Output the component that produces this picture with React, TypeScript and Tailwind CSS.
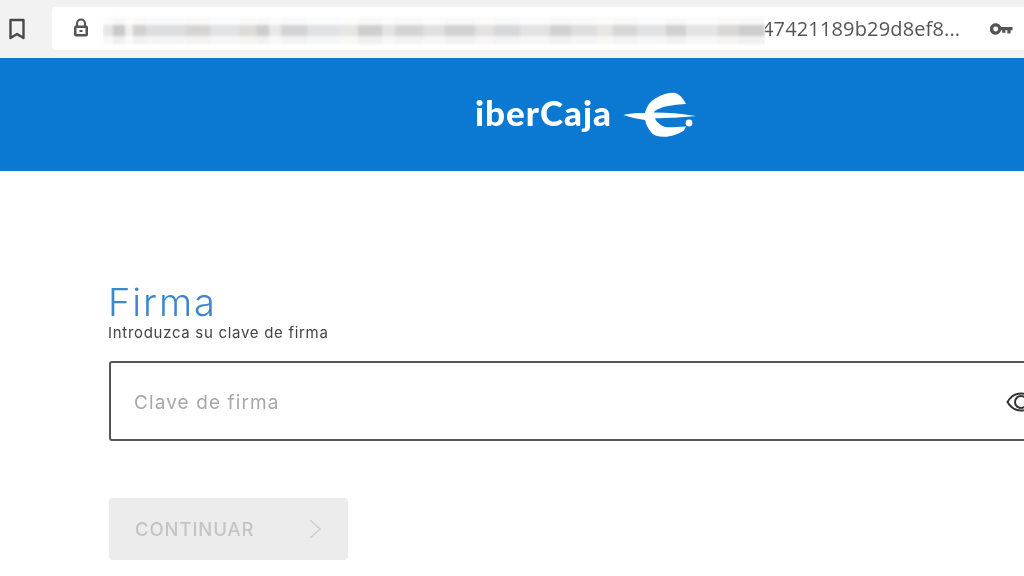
import React from 'react';

const blurBlocks = [
  ['w-[10px]', 'bg-[#e6e6e6]'], ['w-[12px]', 'bg-[#c9c9c9]'], ['w-[8px]', 'bg-[#efefef]'], ['w-[14px]', 'bg-[#d3d1cf]'],
  ['w-[40px]', 'bg-[#dcdddf]'], ['w-[24px]', 'bg-[#d6d4d3]'], ['w-[30px]', 'bg-[#e1e2e4]'], ['w-[18px]', 'bg-[#dfdbd8]'],
  ['w-[12px]', 'bg-[#cdcdcd]'], ['w-[12px]', 'bg-[#e8e8e8]'], ['w-[26px]', 'bg-[#d3d3d6]'], ['w-[34px]', 'bg-[#dfe1e4]'],
  ['w-[18px]', 'bg-[#e8e6e4]'], ['w-[24px]', 'bg-[#cecece]'], ['w-[14px]', 'bg-[#e3e4e6]'], ['w-[28px]', 'bg-[#d4d3d3]'],
  ['w-[22px]', 'bg-[#e0e0e2]'], ['w-[30px]', 'bg-[#d2d2d2]'], ['w-[20px]', 'bg-[#e4e2e0]'], ['w-[26px]', 'bg-[#d7d8db]'],
  ['w-[30px]', 'bg-[#e2e2e2]'], ['w-[22px]', 'bg-[#d1d1d1]'], ['w-[26px]', 'bg-[#dededf]'], ['w-[16px]', 'bg-[#e8e5e2]'],
  ['w-[24px]', 'bg-[#d6d6d6]'], ['w-[30px]', 'bg-[#e0e1e3]'], ['w-[20px]', 'bg-[#d0d0d0]'], ['w-[32px]', 'bg-[#e4e4e4]'],
  ['w-[22px]', 'bg-[#d9d7d5]'], ['w-[26px]', 'bg-[#cdcdcd]'],
];

const LockIcon = () => (
  <svg width="18" height="20" viewBox="0 0 18 20" fill="none">
    <path d="M5 8V5.5a4 4 0 0 1 8 0V8" stroke="#555" strokeWidth="2.2" />
    <rect x="2" y="7.5" width="14" height="11" rx="2" fill="#555" />
    <rect x="4.5" y="10" width="9" height="6" fill="#fff" />
    <rect x="7.5" y="12" width="3" height="2" fill="#555" />
  </svg>
);

const Logo = () => (
  <svg width="74" height="46" viewBox="0 0 74 46" fill="#fff">
    <path d="M1.3 23 C9 21 16 20.8 23 21 C25 13 30 7.5 35 5.5 C40 2.5 46 .7 51.3 .7 C57 1 61 6 64 12 C55 12.5 46 13.5 40 15.5 C36 17 33 18.5 31.5 20.5 C45 20.6 60 21.5 74 24 C60 25.6 45 26 33 26.3 C34 29 35 30 36.7 31.3 C40 34.5 43 35.5 46.7 35.3 C52 35.2 58 35 64 34.5 L62 38.5 C56 42 48 45.2 41.3 44.8 C36 44.8 32 43.5 29.7 41 C26 37 24 32 23 28 C15 27 8 25 1.3 23 Z" />
    <circle cx="67" cy="31" r="3.4" />
  </svg>
);

const EyeIcon = () => (
  <svg width="30" height="20" viewBox="0 0 30 20" fill="none" stroke="#333" strokeWidth="2">
    <path d="M1.5 10 C5 4 10 1.5 15 1.5 C20 1.5 25 4 28.5 10 C25 16 20 18.5 15 18.5 C10 18.5 5 16 1.5 10 Z" />
    <circle cx="15" cy="10" r="6" />
  </svg>
);

export default function App() {
  return (
    <div className="w-[1024px] h-[576px] overflow-hidden bg-white font-['Liberation_Sans',sans-serif]">
      {/* browser bar */}
      <div className="h-[58px] bg-[#f2f2f2] flex items-start">
        <div className="w-[52px] h-full flex items-center justify-center pr-[18px] pb-[1px]">
          <svg width="18" height="22" viewBox="0 0 18 22" fill="none">
            <path d="M2.5 2h13v18l-6.5-4-6.5 4z" stroke="#4a4a4a" strokeWidth="2.4" strokeLinejoin="round" />
          </svg>
        </div>
        <div className="mt-[7px] h-[43px] flex-1 bg-white flex items-center rounded-l-[4px]">
          <div className="w-[51px] flex justify-center pl-[6px] pb-[1px]">
            <LockIcon />
          </div>
          {/* pixelated url */}
          <div className="relative z-10 w-[662px] h-full bg-white flex flex-col justify-center pt-[3px] overflow-hidden">
            <div className="flex flex-col blur-[1.5px]">
              <div className="flex h-[8px] opacity-15">
                {blurBlocks.map(([w, c], i) => (
                  <div key={i} className={`${w} ${c}`} />
                ))}
              </div>
              <div className="flex h-[11px]">
                {blurBlocks.map(([w, c], i) => (
                  <div key={i} className={`${w} ${c}`} />
                ))}
              </div>
              <div className="flex h-[8px] opacity-30">
                {blurBlocks.map(([w, c], i) => (
                  <div key={i} className={`${w} ${c}`} />
                ))}
              </div>
            </div>
          </div>
          <span className="font-['Open_Sans',sans-serif] text-[20px] text-[#555] whitespace-nowrap w-[226px] -ml-[3px] tracking-[0.15px] blur-[0.4px]">
            47421189b29d8ef8...
          </span>
          <svg className="ml-[2px]" width="23" height="12" viewBox="0 0 24 12" fill="#555">
            <path d="M6 0a6 6 0 0 1 5.6 4H23.5v3.4h-2v3.2h-3.4V7.4h-2v2.4h-3.4V7.4h-1.1A6 6 0 1 1 6 0zm0 3.4a2.6 2.6 0 1 0 0 5.2 2.6 2.6 0 0 0 0-5.2z" />
          </svg>
        </div>
      </div>

      {/* blue header */}
      <div className="h-[113px] bg-[#0b78d1] flex items-center justify-center pl-[147px]">
        <span className="font-['Lato',sans-serif] font-black text-[35px] text-white tracking-[1px] leading-none mr-[10px] mb-[5px] blur-[0.3px]">
          iberCaja
        </span>
        <Logo />
      </div>

      {/* form */}
      <div className="pl-[109px] pt-[110px]">
        <h1 className="font-['Inter',sans-serif] font-light text-[38px] leading-[42px] text-[#3f86cc] -ml-[1px] tracking-[1.9px] blur-[0.3px]">
          Firma
        </h1>
        <p className="font-['Inter',sans-serif] text-[15px] leading-[18px] text-[#444] -ml-[1px] mt-[1px] tracking-[0.7px] blur-[0.3px]">
          Introduzca su clave de firma
        </p>
        <div className="mt-[19px] w-[960px] h-[80px] border-2 border-[#555] rounded-[3px] flex items-center pl-[23px]">
          <span className="font-['Inter',sans-serif] text-[19px] text-[#a8a8a8] w-[872px] shrink-0 pt-[4px] tracking-[1.1px] blur-[0.3px]">
            Clave de firma
          </span>
          <div className="shrink-0 pt-[1px]">
            <EyeIcon />
          </div>
        </div>
        <button className="mt-[57px] w-[239px] h-[62px] bg-[#ececec] rounded-[3px] flex items-center pl-[26px]">
          <span className="font-['Inter',sans-serif] font-medium text-[18.5px] text-[#c4c4c4] tracking-[0.9px] pt-[1px] blur-[0.3px]">
            CONTINUAR
          </span>
          <svg className="ml-[54px]" width="14" height="22" viewBox="0 0 14 22" fill="none" stroke="#d0d0d0" strokeWidth="1.6">
            <path d="M2 2l10 9-10 9" />
          </svg>
        </button>
      </div>
    </div>
  );
}
